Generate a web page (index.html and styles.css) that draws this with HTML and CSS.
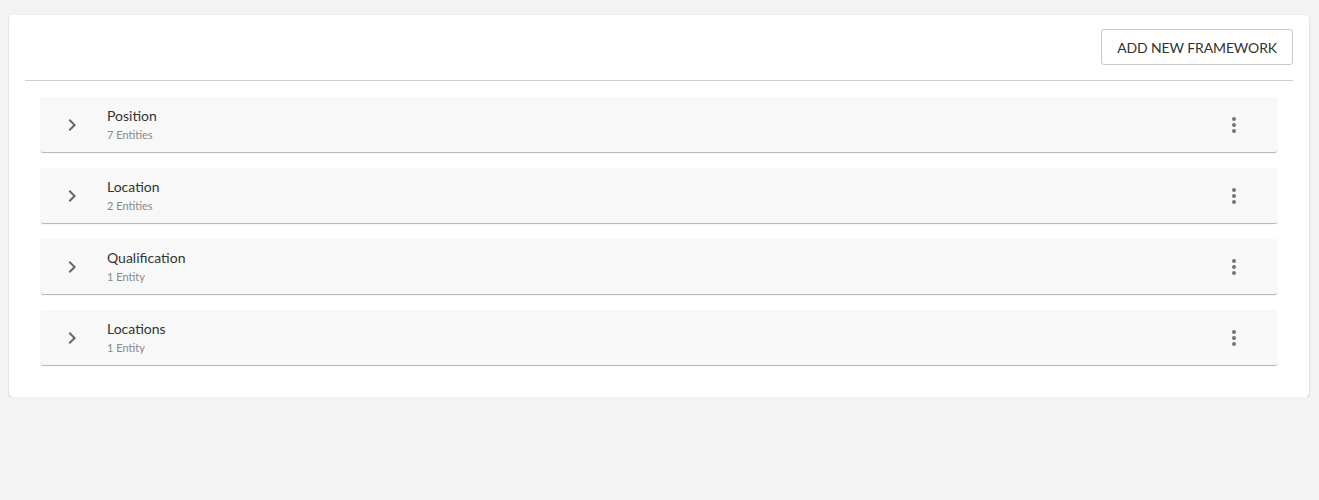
FILE: index.html
```html
<!DOCTYPE html>
<html>
<head>
<meta charset="utf-8">
<link rel="stylesheet" href="styles.css">
</head>
<body>
<div class="card">
  <div class="toolbar">
    <button class="btn">ADD NEW FRAMEWORK</button>
  </div>
  <div class="divider"></div>
  <div class="list">
    <div class="row">
      <svg class="chev" viewBox="0 0 24 24"><path d="M10 6L8.59 7.41 13.17 12l-4.58 4.59L10 18l6-6z"/></svg>
      <div class="text"><div class="title">Position</div><div class="sub">7 Entities</div></div>
      <svg class="kebab" viewBox="0 0 24 24"><circle cx="12" cy="6" r="2"/><circle cx="12" cy="12" r="2"/><circle cx="12" cy="18" r="2"/></svg>
    </div>
    <div class="row">
      <svg class="chev" viewBox="0 0 24 24"><path d="M10 6L8.59 7.41 13.17 12l-4.58 4.59L10 18l6-6z"/></svg>
      <div class="text"><div class="title">Location</div><div class="sub">2 Entities</div></div>
      <svg class="kebab" viewBox="0 0 24 24"><circle cx="12" cy="6" r="2"/><circle cx="12" cy="12" r="2"/><circle cx="12" cy="18" r="2"/></svg>
    </div>
    <div class="row">
      <svg class="chev" viewBox="0 0 24 24"><path d="M10 6L8.59 7.41 13.17 12l-4.58 4.59L10 18l6-6z"/></svg>
      <div class="text"><div class="title">Qualification</div><div class="sub">1 Entity</div></div>
      <svg class="kebab" viewBox="0 0 24 24"><circle cx="12" cy="6" r="2"/><circle cx="12" cy="12" r="2"/><circle cx="12" cy="18" r="2"/></svg>
    </div>
    <div class="row">
      <svg class="chev" viewBox="0 0 24 24"><path d="M10 6L8.59 7.41 13.17 12l-4.58 4.59L10 18l6-6z"/></svg>
      <div class="text"><div class="title">Locations</div><div class="sub">1 Entity</div></div>
      <svg class="kebab" viewBox="0 0 24 24"><circle cx="12" cy="6" r="2"/><circle cx="12" cy="12" r="2"/><circle cx="12" cy="18" r="2"/></svg>
    </div>
  </div>
</div>
</body>
</html>
```
FILE: styles.css
```css
html, body {
  margin: 0;
  padding: 0;
  background: #f3f3f3;
  font-family: Lato, "Liberation Sans", sans-serif;
}
body {
  padding: 15px 10px 0 9px;
}
.card {
  background: #fff;
  border-radius: 4px;
  box-shadow: 0 1px 2px rgba(0,0,0,0.25);
  padding: 14px 16px 32px 16px;
}
.toolbar {
  display: flex;
  justify-content: flex-end;
}
.btn {
  height: 36px;
  padding: 0 15px;
  background: #fff;
  border: 1px solid #c8c8c8;
  border-radius: 3px;
  font-family: Lato, "Liberation Sans", sans-serif;
  font-size: 14px;
  font-weight: 400;
  color: #333;
  letter-spacing: -0.12px;
}
.divider {
  height: 1px;
  background: #cfcfcf;
  margin-top: 15px;
}
.list {
  display: flex;
  flex-direction: column;
  gap: 16px;
  padding: 16px 16px 0 16px;
}
.row {
  display: flex;
  align-items: center;
  height: 55px;
  background: #f8f8f8;
  box-shadow: 0 1px 1px rgba(0,0,0,0.3);
  border-radius: 2px;
  padding: 0 31px 0 19px;
}
.chev {
  width: 24px;
  height: 24px;
  fill: #666;
  flex: none;
}
.text {
  margin-left: 23px;
  flex: 1;
}
.title {
  font-size: 14px;
  color: #333;
  line-height: 18px;
}
.sub {
  font-size: 11px;
  color: #888;
  line-height: 16px;
  margin-top: 2px;
}
.kebab {
  width: 24px;
  height: 24px;
  fill: #757575;
  flex: none;
}
```
